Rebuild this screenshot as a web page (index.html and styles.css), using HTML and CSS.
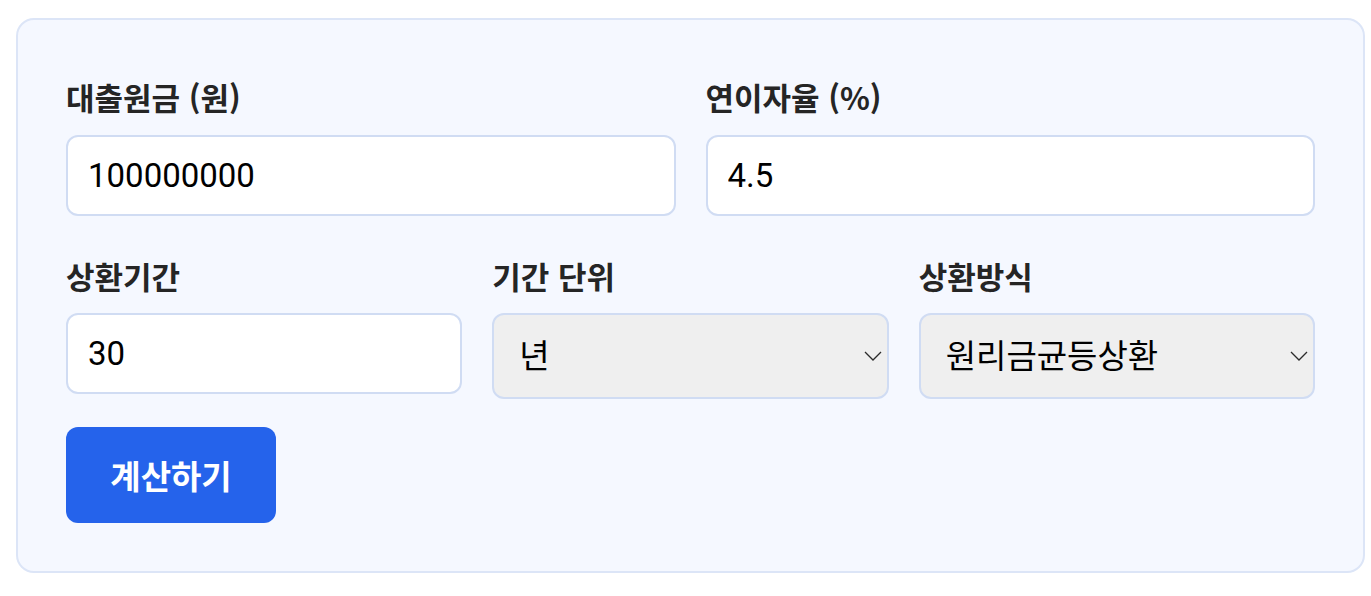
FILE: index.html
```html
<!DOCTYPE html>
<html lang="ko">
<head>
<meta charset="utf-8">
<title>대출 계산기</title>
<link rel="stylesheet" href="styles.css">
</head>
<body>
<div class="card">
  <div class="row row-2">
    <div class="field">
      <label class="label" for="principal">대출원금 (원)</label>
      <input class="control" id="principal" type="text" value="100000000">
    </div>
    <div class="field">
      <label class="label" for="rate">연이자율 (%)</label>
      <input class="control" id="rate" type="text" value="4.5">
    </div>
  </div>
  <div class="row row-3">
    <div class="field">
      <label class="label" for="term">상환기간</label>
      <input class="control" id="term" type="text" value="30">
    </div>
    <div class="field">
      <label class="label" for="unit">기간 단위</label>
      <div class="select-wrap">
        <select class="control select" id="unit">
          <option>년</option>
          <option>개월</option>
        </select>
        <svg class="chevron" width="18" height="10" viewBox="0 0 18 10" aria-hidden="true"><path d="M1 1 L9 9 L17 1" fill="none" stroke="#2b2b2b" stroke-width="1.3"/></svg>
      </div>
    </div>
    <div class="field">
      <label class="label" for="method">상환방식</label>
      <div class="select-wrap">
        <select class="control select" id="method">
          <option>원리금균등상환</option>
          <option>원금균등상환</option>
          <option>만기일시상환</option>
        </select>
        <svg class="chevron" width="18" height="10" viewBox="0 0 18 10" aria-hidden="true"><path d="M1 1 L9 9 L17 1" fill="none" stroke="#2b2b2b" stroke-width="1.3"/></svg>
      </div>
    </div>
  </div>
  <div class="actions">
    <button class="btn" type="button">계산하기</button>
  </div>
</div>
</body>
</html>
```

FILE: styles.css
```css
html, body {
  margin: 0;
  padding: 0;
  background: #ffffff;
}
body {
  padding: 18px 6px 0 16px;
  font-family: Roboto, "Noto Sans CJK KR", sans-serif;
}
.card {
  box-sizing: border-box;
  width: 1349px;
  background: #f5f8ff;
  border: 2px solid #dce5f7;
  border-radius: 18px;
  padding: 56px 48px 48px 48px;
}
.row {
  display: grid;
  column-gap: 30px;
}
.row-2 {
  grid-template-columns: minmax(0, 1fr) minmax(0, 1fr);
}
.row-3 {
  grid-template-columns: minmax(0, 1fr) minmax(0, 1fr) minmax(0, 1fr);
  margin-top: 39px;
}
.field {
  display: flex;
  flex-direction: column;
  min-width: 0;
}
.label {
  display: block;
  font-family: "Noto Sans CJK KR", sans-serif;
  font-size: 31px;
  line-height: 42px;
  font-weight: 700;
  color: #252525;
  margin-bottom: 17px;
}
.control {
  box-sizing: border-box;
  width: 100%;
  height: 81px;
  border: 2px solid #d0dcf3;
  border-radius: 12px;
  background: #ffffff;
  padding: 0 20px;
  font-family: Roboto, "Noto Sans CJK KR", sans-serif;
  font-size: 33px;
  color: #000000;
  outline: none;
  margin: 0;
}
.select-wrap {
  position: relative;
}
.select {
  display: block;
  height: 86px;
  appearance: none;
  -webkit-appearance: none;
  background-color: #efefef;
  padding-left: 25px;
  padding-right: 40px;
}
.chevron {
  position: absolute;
  right: 7px;
  top: 38px;
  pointer-events: none;
}
.row-3 .label {
  margin-bottom: 16px;
}
.actions {
  margin-top: 28px;
  display: flex;
}
.btn {
  width: 210px;
  height: 96px;
  border: none;
  border-radius: 12px;
  background: #2563eb;
  color: #ffffff;
  font-family: Roboto, "Noto Sans CJK KR", sans-serif;
  font-size: 33px;
  font-weight: 700;
  cursor: pointer;
}
```
